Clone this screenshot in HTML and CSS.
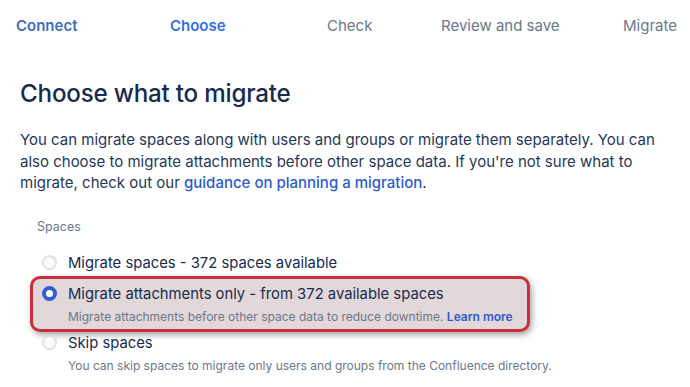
FILE: index.html
```html
<!DOCTYPE html>
<html lang="en">
<head>
  <meta charset="UTF-8" />
  <title>Choose what to migrate</title>
  <link rel="stylesheet" href="styles.css">
</head>
<body>
  <nav class="steps">
    <span class="step done">Connect</span>
    <span class="step current">Choose</span>
    <span class="step">Check</span>
    <span class="step">Review and save</span>
    <span class="step">Migrate</span>
  </nav>

  <main class="content">
    <h1>Choose what to migrate</h1>
    <p class="intro">
      You can migrate spaces along with users and groups or migrate them separately. You can<br>
      also choose to migrate attachments before other space data. If you're not sure what to<br>
      migrate, check out our <a href="#">guidance on planning a migration</a>.
    </p>

    <div class="group">
      <div class="group-label">Spaces</div>

      <label class="option">
        <span class="radio"></span>
        <span class="option-text">Migrate spaces - 372 spaces available</span>
      </label>

      <label class="option highlight">
        <span class="radio checked"></span>
        <span class="option-body">
          <span class="option-text">Migrate attachments only - from 372 available spaces</span>
          <span class="hint">Migrate attachments before other space data to reduce downtime. <a href="#">Learn more</a></span>
        </span>
      </label>

      <label class="option">
        <span class="radio"></span>
        <span class="option-body">
          <span class="option-text">Skip spaces</span>
          <span class="hint">You can skip spaces to migrate only users and groups from the Confluence directory.</span>
        </span>
      </label>
    </div>
  </main>
</body>
</html>
```

FILE: styles.css
```css
* {
  box-sizing: border-box;
  margin: 0;
  padding: 0;
}

body {
  font-family: Inter, "Noto Sans", sans-serif;
  color: #172b4d;
  background: #fff;
  width: 690px;
  height: 387px;
  overflow: hidden;
}

a {
  color: #2d5bd0;
  text-decoration: none;
}

.steps {
  display: flex;
  height: 50px;
  align-items: center;
  padding: 0 0 0 16px;
  font-size: 15px;
  color: #6b778c;
}

.step {
  white-space: nowrap;
}

.step:nth-child(1) { width: 154px; }
.step:nth-child(2) { width: 157px; }
.step:nth-child(3) { width: 114px; }
.step:nth-child(4) { width: 182px; }

.step.done {
  color: #3b6fb6;
  font-weight: 600;
}

.step.current {
  color: #2f6fe3;
  font-weight: 600;
}

.content {
  padding: 28px 20px 0 20px;
}

h1 {
  font-size: 24.2px;
  font-weight: 500;
  letter-spacing: -0.2px;
  line-height: 32px;
  margin-bottom: 19px;
}

.intro {
  font-size: 15px;
  line-height: 21.5px;
  color: #253858;
  white-space: nowrap;
}

.intro a {
  font-weight: 500;
}

.group {
  margin-top: 25px;
}

.group-label {
  font-size: 12.5px;
  color: #6b778c;
  padding-left: 17px;
  margin-bottom: 19px;
}

.option {
  display: flex;
  align-items: flex-start;
  gap: 11px;
  padding-left: 22px;
}

.option + .option {
  margin-top: 3px;
}

.option-body {
  display: flex;
  flex-direction: column;
}

.option-text {
  font-size: 14.8px;
  line-height: 20px;
  color: #172b4d;
  white-space: nowrap;
}

.hint {
  font-size: 12px;
  line-height: 16px;
  color: #6b778c;
  margin-top: 5px;
  white-space: nowrap;
}

.hint a {
  font-weight: 600;
}

.radio {
  width: 15px;
  height: 15px;
  border-radius: 50%;
  border: 2px solid #dfe1e6;
  background: #fafbfc;
  margin-top: 2px;
  flex: none;
}

.radio.checked {
  background: #fff;
  border: 4.5px solid #2f5fd0;
}

.highlight {
  margin-left: 10px;
  padding: 5px 12px 4px 9px;
  background: #e3d8d9;
  border: 3px solid #c82f3a;
  border-radius: 10px;
  box-shadow: 2px 3px 6px rgba(0, 0, 0, 0.35);
  width: 500px;
}

.highlight + .option {
  margin-top: 1px;
}
```
